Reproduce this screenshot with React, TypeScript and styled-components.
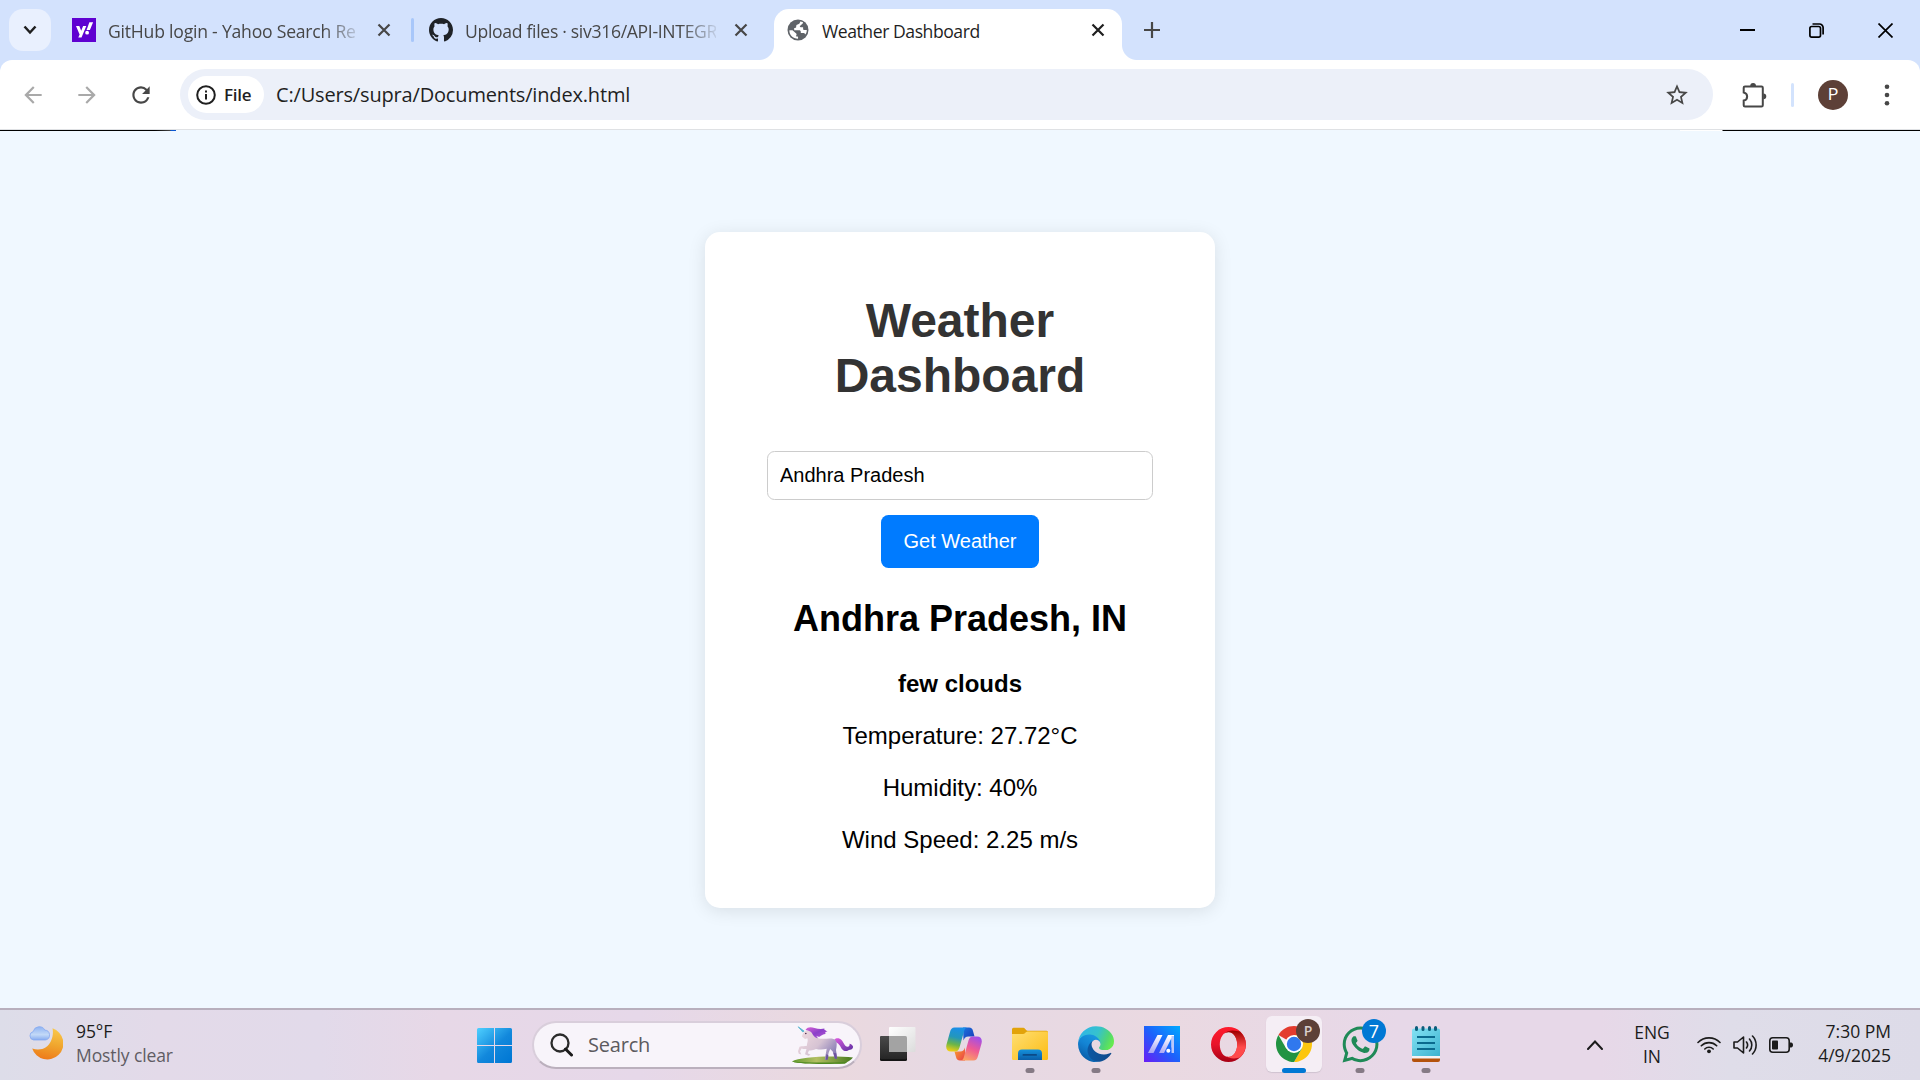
import React from "react";
import styled, { createGlobalStyle, css } from "styled-components";
import { MdArrowBack, MdArrowForward, MdRefresh, MdStarOutline } from "react-icons/md";
import { FaWhatsapp } from "react-icons/fa";
import { BsGithub } from "react-icons/bs";

const GlobalStyle = createGlobalStyle`
  * { box-sizing: border-box; }
  html, body { margin: 0; padding: 0; }
  body { width: 1920px; height: 1080px; overflow: hidden; }
  svg { display: block; flex: none; }
`;

const uiFont = `"Segoe UI", "Open Sans", "Noto Sans", sans-serif`;
const pageFont = `Arial, "Liberation Sans", sans-serif`;

const Screen = styled.div`
  display: flex;
  flex-direction: column;
  width: 1920px;
  height: 1080px;
  overflow: hidden;
  font-family: ${uiFont};
`;

/* ---------- Tab strip ---------- */

const TabStrip = styled.div`
  display: flex;
  align-items: flex-start;
  height: 60px;
  padding: 9px 0 0 9px;
  background: #d3e2fd;
`;

const TabSearch = styled.button`
  display: flex;
  align-items: center;
  justify-content: center;
  width: 42px;
  height: 42px;
  margin-right: 9px;
  padding: 0;
  border: 0;
  border-radius: 14px;
  background: #e9f0fe;
`;

const Tab = styled.div<{ $width: number; $pad: number; $active?: boolean }>`
  position: relative;
  display: flex;
  align-items: center;
  width: ${(p) => p.$width}px;
  height: ${(p) => (p.$active ? 51 : 42)}px;
  padding: 0 0 ${(p) => (p.$active ? 9 : 0)}px ${(p) => p.$pad}px;
  color: ${(p) => (p.$active ? "#1f1f1f" : "#474747")};
  ${(p) =>
    p.$active &&
    css`
      background: #fff;
      border-radius: 15px 15px 0 0;
      &::before,
      &::after {
        content: "";
        position: absolute;
        bottom: 0;
        width: 15px;
        height: 15px;
      }
      &::before {
        left: -15px;
        background: radial-gradient(circle at 0 0, transparent 14.5px, #fff 15.5px);
      }
      &::after {
        right: -15px;
        background: radial-gradient(circle at 100% 0, transparent 14.5px, #fff 15.5px);
      }
    `}
`;

const Favicon = styled.span<{ $size: number; $gap: number }>`
  display: flex;
  width: ${(p) => p.$size}px;
  margin-right: ${(p) => p.$gap}px;
`;

const TabTitle = styled.span<{ $fade?: boolean; $tight: number }>`
  flex: none;
  width: 251px;
  overflow: hidden;
  white-space: nowrap;
  font-size: 17.6px;
  line-height: 26px;
  letter-spacing: ${(p) => p.$tight}px;
  padding-top: 2px;
  ${(p) => p.$fade && css`mask-image: linear-gradient(to right, #000 216px, transparent 256px);`}
`;

const TabClose = styled.span`
  display: flex;
  justify-content: center;
  width: 50px;
`;

const TabSeparator = styled.span`
  width: 3px;
  height: 24px;
  margin-top: 9px;
  border-radius: 2px;
  background: #a8c7fa;
`;

const NewTab = styled.span`
  display: flex;
  margin: 13px 0 0 22px;
`;

const WindowControls = styled.div`
  display: flex;
  align-items: center;
  gap: 54px;
  height: 42px;
  margin-left: auto;
  padding-right: 27px;
`;

/* ---------- Toolbar ---------- */

const ToolbarBack = styled.div`
  background: #d3e2fd;
`;

const Toolbar = styled.div`
  display: flex;
  align-items: center;
  height: 70px;
  padding-left: 20px;
  background: #fff;
  border-bottom: 1px solid #dfe1e4;
  border-radius: 12px 12px 0 0;
`;

const NavButton = styled.span<{ $dim?: boolean }>`
  display: flex;
  width: 54px;
  color: ${(p) => (p.$dim ? "#a9a9a9" : "#474747")};
`;

const Omnibox = styled.div`
  display: flex;
  align-items: center;
  width: 1533px;
  height: 51px;
  margin-left: -2px;
  padding: 0 23px 0 8px;
  border-radius: 26px;
  background: #ecf0f9;
  color: #474747;
`;

const FileChip = styled.span`
  display: flex;
  align-items: center;
  gap: 8px;
  width: 76px;
  height: 37px;
  padding-left: 8px;
  border-radius: 19px;
  background: #fff;
  color: #1f1f1f;
  font-size: 17px;
  font-weight: 600;
  letter-spacing: -0.3px;
`;

const Url = styled.span`
  margin-left: 12px;
  margin-right: auto;
  color: #1f1f1f;
  font-size: 20px;
  line-height: 28px;
  letter-spacing: -0.17px;
`;

const Extensions = styled.span`
  display: flex;
  margin: 0 24px 0 29px;
`;

const ToolbarDivider = styled.span`
  width: 3px;
  height: 24px;
  border-radius: 2px;
  background: #d3e3fd;
`;

const Profile = styled.span`
  display: flex;
  align-items: center;
  justify-content: center;
  width: 30px;
  height: 30px;
  margin: 0 36px 0 24px;
  border-radius: 50%;
  background: #5d4037;
  color: #fff;
  font-family: Roboto, sans-serif;
  font-size: 16px;
`;

const EdgeLine = styled.div`
  display: flex;
  justify-content: space-between;
  height: 1px;
  background: #f0f8ff;
`;

const EdgeLeft = styled.span`
  width: 176px;
  background: linear-gradient(to right, #000 155px, #444 170px, #0b57d0 171px);
`;

const EdgeRight = styled.span`
  width: 240px;
  background: linear-gradient(to right, #fff 42px, #000 43px);
`;

/* ---------- Page ---------- */

const Page = styled.main`
  display: flex;
  flex: 1;
  justify-content: center;
  align-items: flex-start;
  padding-top: 101px;
  background: #f0f8ff;
  font-family: ${pageFont};
`;

const Card = styled.section`
  display: flex;
  flex-direction: column;
  align-items: center;
  width: 510px;
  height: 676px;
  padding: 61px 60px 0;
  border-radius: 15px;
  background: #fff;
  box-shadow: 0 3px 18px rgba(0, 0, 0, 0.1);
  color: #000;
  text-align: center;
`;

const Title = styled.h1`
  margin: 0 0 48px;
  color: #333;
  font-size: 48px;
  line-height: 55px;
`;

const CityInput = styled.input`
  width: 386px;
  height: 49px;
  margin: 0 0 15px;
  padding: 0 12px;
  border: 1px solid #ccc;
  border-radius: 7.5px;
  background: #fff;
  color: #000;
  font-family: inherit;
  font-size: 20px;
  outline: 0;
`;

const SubmitButton = styled.button`
  width: 158px;
  height: 53px;
  margin: 0 0 30px;
  padding: 0;
  border: 0;
  border-radius: 7.5px;
  background: #007bff;
  color: #fff;
  font-family: inherit;
  font-size: 20px;
`;

const Place = styled.h2`
  margin: 0 0 31px;
  font-size: 36px;
  line-height: 41px;
`;

const Reading = styled.p<{ $strong?: boolean }>`
  margin: 0 0 24px;
  font-size: 24px;
  line-height: 28px;
  font-weight: ${(p) => (p.$strong ? 700 : 400)};
`;

/* ---------- Taskbar ---------- */

const Taskbar = styled.footer`
  display: flex;
  align-items: center;
  height: 72px;
  padding: 0 29px;
  border-top: 2px solid #b8afbd;
  background: linear-gradient(
    to right,
    #dddde9 0,
    #e3dae9 160px,
    #e2daea 320px,
    #e7d8e7 440px,
    #e6d8e9 640px,
    #ead9df 840px,
    #e6d9e4 960px,
    #ead9e1 1160px,
    #e7d8e8 1400px,
    #e7d8e8 1600px,
    #dfdde9 1730px,
    #dddbe8 1920px
  );
  color: #1b1b1b;
  font-size: 17.5px;
  line-height: 24px;
`;

const Weather = styled.div`
  display: flex;
  align-items: center;
  gap: 13px;
  width: 448px;
  padding-bottom: 5px;
`;

const Stack = styled.div<{ $align?: string; $width?: number; $gap?: number; $tight?: number }>`
  display: flex;
  flex-direction: column;
  width: ${(p) => (p.$width ? `${p.$width}px` : "auto")};
  align-items: ${(p) => p.$align || "flex-start"};
  margin-right: ${(p) => p.$gap || 0}px;
  letter-spacing: ${(p) => p.$tight || 0}px;
  white-space: nowrap;
`;

const Muted = styled.span`
  color: #5f5c63;
`;

const SearchBox = styled.div`
  display: flex;
  align-items: center;
  width: 330px;
  height: 48px;
  margin: 0 3px 0 20px;
  padding: 0 5px 0 16px;
  border: 2px solid #d9cedb;
  border-bottom-color: #bbb0bd;
  border-radius: 24px;
  background: #f8f4fa;
  color: #5c5a5e;
  font-size: 20px;
`;

const SearchText = styled.span`
  margin: 0 auto 0 15px;
  letter-spacing: -0.2px;
`;

const AppSlot = styled.div`
  position: relative;
  display: flex;
  justify-content: center;
  width: 66px;
  height: 70px;
  padding-top: 6px;
`;

const Tile = styled.div<{ $active?: boolean }>`
  position: relative;
  display: flex;
  align-items: center;
  justify-content: center;
  width: 56px;
  height: 56px;
  border-radius: 6px;
  ${(p) =>
    p.$active &&
    css`
      background: #f5eef5;
      box-shadow: 0 1px 1px #cfc3d0;
    `}
`;

const Indicator = styled.span<{ $active?: boolean }>`
  position: absolute;
  bottom: 7px;
  left: 50%;
  width: ${(p) => (p.$active ? 24 : 9)}px;
  height: 5px;
  transform: translateX(-50%);
  border-radius: 3px;
  background: ${(p) => (p.$active ? "#0078d4" : "#857a85")};
`;

const Badge = styled.span<{ $color: string; $small?: boolean }>`
  position: absolute;
  top: 3px;
  right: 2px;
  width: 24px;
  height: 24px;
  border-radius: 50%;
  background: ${(p) => p.$color};
  color: ${(p) => (p.$small ? "#d9cfcc" : "#fff")};
  font-size: ${(p) => (p.$small ? 14 : 18)}px;
  font-weight: ${(p) => (p.$small ? 600 : 400)};
  line-height: 24px;
  text-align: center;
`;

const Tray = styled.div`
  display: flex;
  align-items: center;
  margin-left: auto;
`;

const TrayIcons = styled.div`
  display: flex;
  align-items: center;
  gap: 12px;
`;

const TrayArrow = styled.span`
  display: flex;
  margin-right: 32px;
`;

const TrayText = styled(Stack)`
  padding-bottom: 2px;
`;

const ClockText = styled(Stack)`
  padding-bottom: 4px;
`;

/* ---------- Drawings ---------- */

const CloseGlyph = ({ color }: { color: string }) => (
  <svg width="14" height="14" viewBox="0 0 14 14">
    <path d="M1.500 1.500l11 11M12.500 1.500l-11 11" stroke={color} strokeWidth="2.200" />
  </svg>
);

const GlobeIcon = () => (
  <svg width="22" height="22" viewBox="0 0 22 22">
    <circle cx="11" cy="11" r="10.500" fill="#5f6368" />
    <path
      d="M13.200 2.600c-.2 1.600-.9 2.500-2.500 2.800-1.300.3-1.600 1-1.500 2.300 0 1.100-.8 1.300-2 1.400v2.200h4.600c1.500 0 2 .6 2 1.800v1h2.200c1.100 0 1.800.5 2.300 1.400 1-1.200 1.500-2.800 1.500-4.500h-2.300c-1 0-1.400-.5-1.400-1.500V8.200h-2.300c-1 0-1.300-.7-.6-1.400l2.500-2.400c.4-.5.400-1 0-1.500z"
      fill="#fff"
    />
    <path d="M2.400 11.200h3.100l3.700 3.300c.6.6.5 1.200 0 1.800v1.200h1.600c.4.5.4 1.300.2 2.300C6 19.600 2.100 15.800 2.400 11.200z" fill="#fff" />
  </svg>
);

const YahooIcon = () => (
  <svg width="24" height="24" viewBox="0 0 24 24">
    <rect width="24" height="24" fill="#5f01d1" />
    <path d="M4 8h3.300l1.900 4.800L11.100 8h3.200l-4.800 11.500H6.300l1.300-3.100z" fill="#fff" />
    <path d="M17.400 4.300h3.700l-3.200 7.800h-3.300z" fill="#fff" />
    <circle cx="15.100" cy="14.700" r="1.900" fill="#fff" />
  </svg>
);

const PuzzleIcon = () => (
  <svg width="25" height="26" viewBox="0 0 25 26">
    <path
      d="M3 4.500h16.500a1.300 1.300 0 0 1 1.300 1.300v17.400a1.300 1.300 0 0 1-1.300 1.300H3a1.300 1.300 0 0 1-1.300-1.300v-4.600c4.600-.9 4.600-7.300 0-8.200V5.800A1.300 1.300 0 0 1 3 4.500z"
      fill="none"
      stroke="#474747"
      strokeWidth="2"
    />
    <path d="M8.200 4a2.900 3 0 0 1 5.800 0zM21.300 11.400a3 2.900 0 0 1 0 5.800z" fill="#474747" />
  </svg>
);

const MoonCloud = () => (
  <svg width="34" height="34" viewBox="0 0 34 34">
    <defs>
      <linearGradient id="moon" x1="0.600" y1="0" x2="0.400" y2="1">
        <stop offset="0" stopColor="#f9c74a" />
        <stop offset="0.500" stopColor="#f0a62e" />
        <stop offset="1" stopColor="#ee7a1a" />
      </linearGradient>
      <linearGradient id="cloud" x1="0" y1="0" x2="0" y2="1">
        <stop offset="0" stopColor="#8fb3f3" />
        <stop offset="0.600" stopColor="#c3d9f7" />
        <stop offset="1" stopColor="#86abf0" />
      </linearGradient>
    </defs>
    <path d="M23.500 2.300A16 16 0 1 1 3.200 22.500C12 25.500 19 21.500 22 15c2-4.500 2.300-8.500 1.500-12.700z" fill="url(#moon)" />
    <path
      d="M4.500 14a4.300 4.300 0 0 1-.3-8.400A6.200 6.200 0 0 1 15.800 4.100 5 5 0 0 1 16.500 14z"
      fill="url(#cloud)"
      stroke="#86aaf0"
      strokeWidth="0.800"
    />
  </svg>
);

const WindowsLogo = () => (
  <svg width="35" height="35" viewBox="0 0 35 35">
    <defs>
      <linearGradient id="win" gradientUnits="userSpaceOnUse" x1="0" y1="0" x2="32" y2="35">
        <stop offset="0" stopColor="#4fd0ff" />
        <stop offset="0.550" stopColor="#1288dc" />
        <stop offset="1" stopColor="#0077d4" />
      </linearGradient>
    </defs>
    <path
      d="M1.500 0H17v17H0V1.500A1.500 1.500 0 0 1 1.500 0zM18 0h15.500A1.500 1.500 0 0 1 35 1.500V17H18zM0 18h17v17H1.500A1.500 1.500 0 0 1 0 33.500zM18 18h17v15.500a1.500 1.500 0 0 1-1.500 1.500H18z"
      fill="url(#win)"
    />
  </svg>
);

const Magnifier = () => (
  <svg width="23" height="24" viewBox="0 0 23 24">
    <circle cx="10" cy="10" r="8.500" fill="none" stroke="#2b2b2b" strokeWidth="2.300" />
    <path d="M15.500 16l6 6" stroke="#1b1b1b" strokeWidth="3" strokeLinecap="round" />
  </svg>
);

const Unicorn = () => (
  <svg width="64" height="38" viewBox="0 0 64 38">
    <defs>
      <linearGradient id="uBody" gradientUnits="userSpaceOnUse" x1="12" y1="4" x2="44" y2="32">
        <stop offset="0" stopColor="#efd9df" />
        <stop offset="0.500" stopColor="#d6c3d3" />
        <stop offset="1" stopColor="#7a6fb0" />
      </linearGradient>
      <linearGradient id="uMane" x1="0" y1="0" x2="1" y2="1">
        <stop offset="0" stopColor="#d863d6" />
        <stop offset="0.500" stopColor="#8b3fc9" />
        <stop offset="1" stopColor="#b659d6" />
      </linearGradient>
      <linearGradient id="uTail" x1="0" y1="0" x2="1" y2="1">
        <stop offset="0" stopColor="#dd5be0" />
        <stop offset="1" stopColor="#5b2fa0" />
      </linearGradient>
      <linearGradient id="uGrass" x1="0" y1="0" x2="1" y2="0">
        <stop offset="0" stopColor="#5f9a2c" />
        <stop offset="0.400" stopColor="#b3bf63" />
        <stop offset="1" stopColor="#477a1d" />
      </linearGradient>
    </defs>
    <path d="M1 35.500C9 30 45 29.500 62 31.500c-2 2.500-5 4-8 6-19 .8-44 .8-53-2z" fill="url(#uGrass)" />
    <path d="M1 35.500c14 1.300 34 1.300 55 .4l-2 1.600c-19 .8-44 .8-53-2z" fill="#4f8a22" />
    <path d="M43.500 13.500c1.500-1.800 5-1.800 7 .5 2.500 2.800 3 6.300 6 6.800 1.500.2 2.500-1.500 2-3 3 .8 4.500 3 3 4.600-1.500 1.800-3.500.800-4.500 2-2 1.400-5 .3-6.500-2-1.500-2.500-2.500-5.500-7-7z" fill="url(#uTail)" />
    <path
      d="M11 10.500c.5-3.500 3-6.500 6.500-6 3.500.5 6.500 5 9.500 7.500 4 2 11-.5 15.500 1 3.500 1.300 3.500 4.500 3 8l-.5 3 1.200 8.500h-2.500l-2-7-2.500-2.500-1.500 3.500-1.500 7.200h-2.500l1.400-7.700.6-3.300c-3.500 1-7.500 1-10.700.2-2.500 1-5.500 1.500-7 1.600l-1.300 2.700 2.800 1.500-2 1-3.500-1.500 1.500-5.200c-2 .3-3-.2-5-.5l-1.500 3 1.300 3-2.500-.8-.8-2.500 1.500-4.500c3-.7 5-.5 7.500-1-.3-2.500 1.500-4.500.3-7.500l-2.300.8z"
      fill="url(#uBody)"
    />
    <path d="M35.500 28l-.8 5.800h2l.8-4.300zM42.500 27l1.500 5.700h2l-.8-5.500z" fill="#6e529f" />
    <path d="M14.500 4c2-3.500 6-3 9-2 3.500 1 7 1.300 10 .5-.4.7-.2 1.200.5 1.500l2.500 1.800c-1.700 0-2.500.4-2.200 1.200.5.8 0 1.200-1 1.200-1.500.3-3.300 1.300-4.300 2.300-1.500.5-2.500 0-3.500-.8.3 1 .5 1.500 1.500 2.500-3-.2-4.800-2.500-6-5C20 5.500 18 4.500 14.500 4z" fill="url(#uMane)" />
    <path d="M7.200 0.800l4.600 5.200 1.300-.9z" fill="#56b5cf" stroke="#56b5cf" strokeWidth="0.800" />
    <circle cx="14.800" cy="7.500" r="0.800" fill="#4a2b4d" />
  </svg>
);

const TaskViewIcon = () => (
  <svg width="36" height="36" viewBox="0 0 36 36">
    <defs>
      <linearGradient id="tvDark" x1="0" y1="0" x2="0" y2="1">
        <stop offset="0" stopColor="#4a4a4a" />
        <stop offset="1" stopColor="#262626" />
      </linearGradient>
      <linearGradient id="tvLight" x1="0" y1="0" x2="1" y2="1">
        <stop offset="0" stopColor="#fff" />
        <stop offset="1" stopColor="#dcdcdc" />
      </linearGradient>
    </defs>
    <rect x="0" y="10" width="27" height="25" rx="1.500" fill="#151515" />
    <rect x="0" y="10" width="27" height="23" rx="1.500" fill="url(#tvDark)" />
    <rect x="9" y="1" width="26.500" height="25" rx="1" fill="url(#tvLight)" />
    <path d="M9 10h16.500a1.500 1.500 0 0 1 1.500 1.500V26H9z" fill="#a3a3a3" />
  </svg>
);

const CopilotIcon = () => (
  <svg width="36" height="34" viewBox="0 0 36 34">
    <defs>
      <linearGradient id="cpL" x1="0.500" y1="0" x2="0.300" y2="1">
        <stop offset="0" stopColor="#1a8ee8" />
        <stop offset="0.400" stopColor="#2397bb" />
        <stop offset="0.700" stopColor="#6bb549" />
        <stop offset="1" stopColor="#f2cf10" />
      </linearGradient>
      <linearGradient id="cpR" x1="0.700" y1="0" x2="0.300" y2="1">
        <stop offset="0" stopColor="#a14fe8" />
        <stop offset="0.500" stopColor="#ef5a93" />
        <stop offset="1" stopColor="#fba463" />
      </linearGradient>
      <linearGradient id="cpT" x1="0" y1="0" x2="1" y2="1">
        <stop offset="0" stopColor="#1c73dd" />
        <stop offset="1" stopColor="#1738b6" />
      </linearGradient>
      <linearGradient id="cpB" x1="0" y1="0" x2="1" y2="1">
        <stop offset="0" stopColor="#f9a52c" />
        <stop offset="1" stopColor="#e93d4a" />
      </linearGradient>
    </defs>
    <path d="M17 0.500h6c2.500 0 3.500 1.500 4 3.500l1.500 5.500h-6c-3 0-4 1.500-5 4z" fill="url(#cpT)" />
    <path d="M19 33.500h-5c-2.500 0-3.500-1.500-4-3.500l-1.500-5.500h5.500c3 0 4-1.500 5-4z" fill="url(#cpB)" />
    <path d="M8.500 0.500H21c-2 .5-2.500 2-3 4l-4.500 16c-.8 2.700-2 4-4.500 4H5c-4 0-5.500-3-4.500-7L4 5C4.800 2 6 .5 8.500.5z" fill="url(#cpL)" />
    <path d="M27.500 33.500H15c2-.5 2.500-2 3-4l4.500-16c.8-2.700 2-4 4.500-4h4c4 0 5.500 3 4.500 7L32 29c-.8 3-2 4.500-4.500 4.500z" fill="url(#cpR)" />
  </svg>
);

const FolderIcon = () => (
  <svg width="36" height="34" viewBox="0 0 36 34">
    <defs>
      <linearGradient id="fdBody" x1="0" y1="0" x2="1" y2="1">
        <stop offset="0" stopColor="#ffdf73" />
        <stop offset="1" stopColor="#fcbc14" />
      </linearGradient>
      <linearGradient id="fdBlue" x1="0" y1="0" x2="0" y2="1">
        <stop offset="0" stopColor="#1592dc" />
        <stop offset="1" stopColor="#0a5ea9" />
      </linearGradient>
    </defs>
    <path d="M0 2.300A1.500 1.500 0 0 1 1.500.8h10c1.600 0 2.300 3 4 3h19A1.500 1.500 0 0 1 36 5.300V12H0z" fill="#e2a30a" />
    <path d="M0 7h11c2 0 2.600-2.600 4.500-2.600h19.200A1.300 1.300 0 0 1 36 5.700v26A1.300 1.300 0 0 1 34.700 33H1.300A1.300 1.300 0 0 1 0 31.700z" fill="url(#fdBody)" />
    <path d="M6 33v-6.500a4 4 0 0 1 4-4h16a4 4 0 0 1 4 4V33z" fill="url(#fdBlue)" />
    <rect x="10.500" y="27" width="14.500" height="1.800" rx="0.900" fill="#0b4a87" />
  </svg>
);

const EdgeIcon = () => (
  <svg width="36" height="36" viewBox="4.630 4.920 256 254">
    <defs>
      <linearGradient id="edA" x1="0" y1="0.500" x2="1" y2="0.500">
        <stop offset="0" stopColor="#0c59a4" />
        <stop offset="1" stopColor="#114a8b" />
      </linearGradient>
      <linearGradient id="edB" x1="0.800" y1="0" x2="0.300" y2="1">
        <stop offset="0" stopColor="#1b9de2" />
        <stop offset="0.500" stopColor="#1383d3" />
        <stop offset="1" stopColor="#0757a2" />
      </linearGradient>
      <linearGradient id="edC" x1="0" y1="0.300" x2="1" y2="0.600">
        <stop offset="0" stopColor="#30b5e8" />
        <stop offset="0.500" stopColor="#36c2cd" />
        <stop offset="0.800" stopColor="#50d674" />
        <stop offset="1" stopColor="#66eb4e" />
      </linearGradient>
    </defs>
    <path fill="url(#edA)" d="M235.680 195.450a93.730 93.730 0 0 1-10.540 4.710 101.870 101.870 0 0 1-35.900 6.460c-47.320 0-88.540-32.550-88.540-74.320A31.480 31.480 0 0 1 117.130 105c-42.800 1.800-53.800 46.400-53.800 72.530 0 73.880 68.090 81.370 82.760 81.370 7.910 0 19.840-2.300 27-4.560l1.310-.44a128.340 128.340 0 0 0 66.600-52.800 4 4 0 0 0-5.320-5.650Z" />
    <path fill="url(#edB)" d="M110.340 246.340A79.200 79.200 0 0 1 87.600 225a80.720 80.720 0 0 1 29.530-120c3.120-1.470 8.450-4.130 15.540-4a32.350 32.350 0 0 1 25.690 13 31.880 31.880 0 0 1 6.360 18.660c0-.21 24.460-79.600-80-79.600-43.900 0-80 41.660-80 78.210a130.150 130.150 0 0 0 12.110 56 128 128 0 0 0 156.380 67.110 75.550 75.550 0 0 1-62.780-8Z" />
    <path fill="url(#edC)" d="M156.940 153.780c-.81 1.050-3.300 2.500-3.300 5.660 0 2.610 1.700 5.120 4.720 7.230 14.380 10 41.490 8.680 41.560 8.680a59.560 59.560 0 0 0 30.270-8.350 61.380 61.380 0 0 0 30.430-52.880c.26-22.410-8-37.310-11.340-43.910C228.090 28.760 182.350 4.920 132.610 4.920a128 128 0 0 0-128 126.200c.48-36.540 36.800-66.050 80-66.050 3.500 0 23.460.34 42 10.070 16.340 8.580 24.900 18.940 30.850 29.210 6.180 10.670 7.280 24.150 7.280 29.520s-2.740 13.330-7.800 19.910Z" />
  </svg>
);

const ArmouryIcon = () => (
  <svg width="36" height="36" viewBox="0 0 36 36">
    <defs>
      <linearGradient id="maBg" x1="1" y1="0" x2="0" y2="1">
        <stop offset="0" stopColor="#00aaff" />
        <stop offset="0.500" stopColor="#1c62fb" />
        <stop offset="1" stopColor="#6a1cf5" />
      </linearGradient>
      <linearGradient id="maStroke" x1="0.500" y1="0" x2="0.300" y2="1">
        <stop offset="0" stopColor="#fff" />
        <stop offset="1" stopColor="#a9a5f5" />
      </linearGradient>
    </defs>
    <rect width="36" height="36" fill="url(#maBg)" />
    <path d="M13.500 9h5L9.500 27H4zM24 9h6v12.500h-2.500V12l-7.500 15h-5z" fill="url(#maStroke)" />
    <path d="M27.500 10H30v17h-2.500z" fill="#b9c8fb" />
    <circle cx="24.300" cy="24.800" r="2" fill="#fff" />
  </svg>
);

const OperaIcon = () => (
  <svg width="35" height="35" viewBox="0 0 35 35">
    <defs>
      <linearGradient id="opA" x1="0" y1="0" x2="0" y2="1">
        <stop offset="0" stopColor="#ff1b2d" />
        <stop offset="0.500" stopColor="#e8142a" />
        <stop offset="1" stopColor="#a70014" />
      </linearGradient>
      <linearGradient id="opB" x1="0" y1="0" x2="0" y2="1">
        <stop offset="0" stopColor="#9c0000" />
        <stop offset="0.600" stopColor="#ff4b4b" />
      </linearGradient>
    </defs>
    <path
      fillRule="evenodd"
      d="M17.500 0a17.500 17.500 0 1 0 0 35 17.500 17.500 0 1 0 0-35zM17.500 5c5 0 8.700 5.500 8.700 12.500S22.500 30 17.500 30 8.800 24.500 8.800 17.500 12.500 5 17.500 5z"
      fill="url(#opA)"
    />
    <path d="M12 7.500C19 1 26 4.500 29 4.500a17.400 17.400 0 0 1 0 26c-3 .8-10 2.500-17-3C15 30 18.500 30.500 21.500 28.500c3-2.300 4.700-6.500 4.700-11s-1.700-8.700-4.700-11C18.500 4.500 15 5 12 7.500z" fill="url(#opB)" />
  </svg>
);

const ChromeIcon = () => (
  <svg width="36" height="36" viewBox="0 0 48 48">
    <path d="M24 24L3.220 12a24 24 0 0 1 41.560 0z" fill="#e33b2e" />
    <path d="M24 12h20.780A24 24 0 0 1 24 48l10.400-18z" fill="#fcc60e" />
    <path d="M34.400 30L24 48A24 24 0 0 1 3.220 12l10.400 18z" fill="#229342" />
    <circle cx="24" cy="24" r="12" fill="#fff" />
    <circle cx="24" cy="24" r="9.600" fill="#3078ee" />
  </svg>
);

const NotepadIcon = () => (
  <svg width="28" height="36" viewBox="0 0 28 36">
    <defs>
      <linearGradient id="npBody" x1="0" y1="0" x2="1" y2="1">
        <stop offset="0" stopColor="#83e2f4" />
        <stop offset="1" stopColor="#3cb3cf" />
      </linearGradient>
    </defs>
    <path d="M0 30h28v4a2 2 0 0 1-2 2H2a2 2 0 0 1-2-2z" fill="#b4520c" />
    <rect y="28" width="28" height="4.500" fill="#f4f4f4" />
    <path d="M0 4.500A2 2 0 0 1 2 2.500h24a2 2 0 0 1 2 2V30H0z" fill="url(#npBody)" />
    <path d="M5 11h18M5 17h18M5 23h18" stroke="#0a6a8e" strokeWidth="2" />
    <path d="M4.500 1.500v2M11 1.500v2M17.500 1.500v2M23.500 1.500v2" stroke="#0d5e7c" strokeWidth="3" strokeLinecap="round" />
  </svg>
);

const WifiIcon = () => (
  <svg width="24" height="18" viewBox="0 0 24 18" fill="none" stroke="#1b1b1b" strokeWidth="1.600" strokeLinecap="round">
    <path d="M1 6.500a15.500 15.500 0 0 1 22 0M4.300 9.800a10.900 10.900 0 0 1 15.400 0M7.800 13a6 6 0 0 1 8.400 0" />
    <circle cx="12" cy="15.300" r="1.900" fill="#1b1b1b" stroke="none" />
  </svg>
);

const SpeakerIcon = () => (
  <svg width="24" height="20" viewBox="0 0 24 20" fill="none" stroke="#1b1b1b" strokeWidth="1.600" strokeLinecap="round" strokeLinejoin="round">
    <path d="M1 7h3.500l6-5v16l-6-5H1z" />
    <path d="M13.500 7a5 5 0 0 1 0 6M16.500 4a9 9 0 0 1 0 12M19.500 1a13 13 0 0 1 0 18" />
  </svg>
);

const BatteryIcon = () => (
  <svg width="24" height="16" viewBox="0 0 24 16">
    <rect x="0.800" y="0.800" width="19.400" height="14.400" rx="3" fill="none" stroke="#1b1b1b" strokeWidth="1.600" />
    <rect x="3" y="3.500" width="6" height="9" rx="0.800" fill="#1b1b1b" />
    <path d="M21 5.500h1.200c1 0 1.800 1 1.800 2.500s-.8 2.500-1.800 2.500H21z" fill="#1b1b1b" />
  </svg>
);

/* ---------- App ---------- */

type AppEntry = {
  id: string;
  icon: React.ReactNode;
  open?: boolean;
  active?: boolean;
  badge?: { text: string; color: string; small?: boolean };
};

const apps: AppEntry[] = [
  { id: "taskview", icon: <TaskViewIcon /> },
  { id: "copilot", icon: <CopilotIcon /> },
  { id: "explorer", icon: <FolderIcon />, open: true },
  { id: "edge", icon: <EdgeIcon />, open: true },
  { id: "myasus", icon: <ArmouryIcon /> },
  { id: "opera", icon: <OperaIcon /> },
  { id: "chrome", icon: <ChromeIcon />, open: true, active: true, badge: { text: "P", color: "#5d4037", small: true } },
  { id: "whatsapp", icon: <FaWhatsapp size={41} color="#1f8a57" />, open: true, badge: { text: "7", color: "#0078d4" } },
  { id: "notepad", icon: <NotepadIcon />, open: true },
];

export default function App() {
  return (
    <Screen>
      <GlobalStyle />
      <TabStrip>
        <TabSearch>
          <svg width="14" height="10" viewBox="0 0 14 10">
            <path d="M1.500 1.500L7 7.500l5.500-6" fill="none" stroke="#1f1f1f" strokeWidth="2.500" />
          </svg>
        </TabSearch>
        <Tab $width={351} $pad={12}>
          <Favicon $size={24} $gap={12}><YahooIcon /></Favicon>
          <TabTitle $fade $tight={-0.22}>GitHub login - Yahoo Search Re</TabTitle>
          <TabClose><CloseGlyph color="#474747" /></TabClose>
        </Tab>
        <TabSeparator />
        <Tab $width={360} $pad={15}>
          <Favicon $size={24} $gap={12}><BsGithub size={24} color="#1f2328" /></Favicon>
          <TabTitle $fade $tight={-0.32}>Upload files · siv316/API-INTEGR</TabTitle>
          <TabClose><CloseGlyph color="#474747" /></TabClose>
        </Tab>
        <Tab $width={348} $pad={13} $active>
          <Favicon $size={22} $gap={13}><GlobeIcon /></Favicon>
          <TabTitle $tight={-0.45}>Weather Dashboard</TabTitle>
          <TabClose><CloseGlyph color="#1f1f1f" /></TabClose>
        </Tab>
        <NewTab>
          <svg width="16" height="16" viewBox="0 0 16 16">
            <path d="M8 0v16M0 8h16" stroke="#474747" strokeWidth="2.200" />
          </svg>
        </NewTab>
        <WindowControls>
          <svg width="15" height="15" viewBox="0 0 15 15">
            <path d="M0 7h15" stroke="#000" strokeWidth="2" />
          </svg>
          <svg width="15" height="15" viewBox="0 0 15 15" fill="none" stroke="#000" strokeWidth="1.700">
            <rect x="0.900" y="3.500" width="10.600" height="10.600" rx="1.800" />
            <path d="M3.500 1H10.500a3.600 3.600 0 0 1 3.600 3.600V11.500" />
          </svg>
          <svg width="15" height="15" viewBox="0 0 15 15">
            <path d="M0.500 0.500l14 14M14.500 0.500l-14 14" stroke="#000" strokeWidth="1.700" />
          </svg>
        </WindowControls>
      </TabStrip>

      <ToolbarBack>
        <Toolbar>
          <NavButton $dim><MdArrowBack size={26} /></NavButton>
          <NavButton $dim><MdArrowForward size={26} /></NavButton>
          <NavButton><MdRefresh size={26} /></NavButton>
          <Omnibox>
            <FileChip>
              <svg width="20" height="20" viewBox="0 0 20 20">
                <circle cx="10" cy="10" r="8.800" fill="none" stroke="#1f1f1f" strokeWidth="2" />
                <path d="M10 9v5.500M10 5.500v2" stroke="#1f1f1f" strokeWidth="2" />
              </svg>
              File
            </FileChip>
            <Url>C:/Users/supra/Documents/index.html</Url>
            <MdStarOutline size={26} />
          </Omnibox>
          <Extensions><PuzzleIcon /></Extensions>
          <ToolbarDivider />
          <Profile>P</Profile>
          <svg width="6" height="22" viewBox="0 0 6 22" fill="#474747">
            <circle cx="3" cy="2.700" r="2.300" />
            <circle cx="3" cy="11" r="2.300" />
            <circle cx="3" cy="19.300" r="2.300" />
          </svg>
        </Toolbar>
      </ToolbarBack>
      <EdgeLine><EdgeLeft /><EdgeRight /></EdgeLine>

      <Page>
        <Card>
          <Title>Weather Dashboard</Title>
          <CityInput defaultValue="Andhra Pradesh" spellCheck={false} />
          <SubmitButton>Get Weather</SubmitButton>
          <Place>Andhra Pradesh, IN</Place>
          <Reading $strong>few clouds</Reading>
          <Reading>Temperature: 27.72°C</Reading>
          <Reading>Humidity: 40%</Reading>
          <Reading>Wind Speed: 2.25 m/s</Reading>
        </Card>
      </Page>

      <Taskbar>
        <Weather>
          <MoonCloud />
          <Stack $tight={-0.1}>
            <span>95°F</span>
            <Muted>Mostly clear</Muted>
          </Stack>
        </Weather>
        <WindowsLogo />
        <SearchBox>
          <Magnifier />
          <SearchText>Search</SearchText>
          <Unicorn />
        </SearchBox>
        {apps.map((app) => (
          <AppSlot key={app.id}>
            <Tile $active={app.active}>
              {app.icon}
              {app.badge && (
                <Badge $color={app.badge.color} $small={app.badge.small}>{app.badge.text}</Badge>
              )}
            </Tile>
            {app.open && <Indicator $active={app.active} />}
          </AppSlot>
        ))}
        <Tray>
          <TrayArrow>
            <svg width="16" height="10" viewBox="0 0 16 10">
              <path d="M1 9l7-7.500L15 9" fill="none" stroke="#1b1b1b" strokeWidth="2" strokeLinecap="round" />
            </svg>
          </TrayArrow>
          <TrayText $align="center" $width={34} $gap={28} $tight={-0.1}>
            <span>ENG</span>
            <span>IN</span>
          </TrayText>
          <TrayIcons>
            <WifiIcon />
            <SpeakerIcon />
            <BatteryIcon />
          </TrayIcons>
          <ClockText $align="flex-end" $width={98} $tight={0}>
            <span>7:30 PM</span>
            <span>4/9/2025</span>
          </ClockText>
        </Tray>
      </Taskbar>
    </Screen>
  );
}
